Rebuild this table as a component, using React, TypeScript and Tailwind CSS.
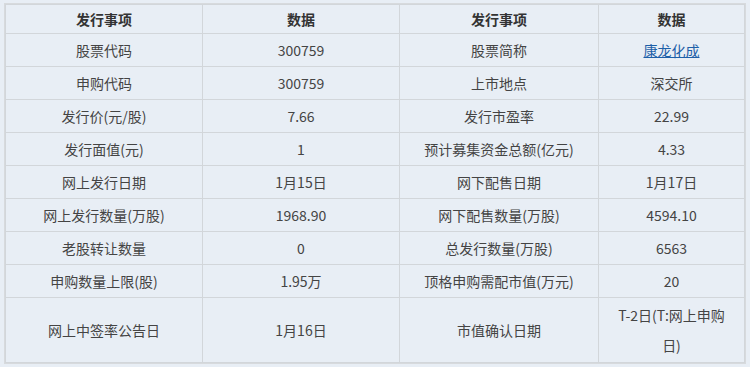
import React from "react";

type Row = {
  label1: string;
  value1: React.ReactNode;
  label2: string;
  value2: React.ReactNode;
  tall?: boolean;
};

const rows: Row[] = [
  { label1: "股票代码", value1: "300759", label2: "股票简称", value2: <a href="#" className="text-[#1d5fa8] underline">康龙化成</a> },
  { label1: "申购代码", value1: "300759", label2: "上市地点", value2: "深交所" },
  { label1: "发行价(元/股)", value1: "7.66", label2: "发行市盈率", value2: "22.99" },
  { label1: "发行面值(元)", value1: "1", label2: "预计募集资金总额(亿元)", value2: "4.33" },
  { label1: "网上发行日期", value1: "1月15日", label2: "网下配售日期", value2: "1月17日" },
  { label1: "网上发行数量(万股)", value1: "1968.90", label2: "网下配售数量(万股)", value2: "4594.10" },
  { label1: "老股转让数量", value1: "0", label2: "总发行数量(万股)", value2: "6563" },
  { label1: "申购数量上限(股)", value1: "1.95万", label2: "顶格申购需配市值(万元)", value2: "20" },
  {
    label1: "网上中签率公告日",
    value1: "1月16日",
    label2: "市值确认日期",
    value2: (
      <>
        T-2日(T:网上申购
        <br />
        日)
      </>
    ),
    tall: true,
  },
];

const cell = "border border-[#d2d6da] text-center align-middle px-[6px] py-0";

export default function App() {
  return (
    <div className="w-[750px] h-[367px] overflow-hidden bg-[#e8eef5] pl-[4px] pt-[3px] font-['Noto_Sans_CJK_SC',sans-serif] text-[14px] text-[#444]">
      <div className="w-[742px] border border-[#d7dadd]">
        <table className="w-full table-fixed border-collapse">
          <colgroup>
            <col className="w-[197px]" />
            <col className="w-[197px]" />
            <col className="w-[199px]" />
            <col />
          </colgroup>
          <thead>
            <tr className="h-[29px] font-bold text-[#333] leading-[24px]">
              <th className={cell}>发行事项</th>
              <th className={cell}>数据</th>
              <th className={cell}>发行事项</th>
              <th className={cell}>数据</th>
            </tr>
          </thead>
          <tbody>
            {rows.map((r) => (
              <tr key={r.label1} className={r.tall ? "h-[65px] leading-[30px]" : "h-[33px] leading-[26px]"}>
                <td className={cell}>{r.label1}</td>
                <td className={cell}>{r.value1}</td>
                <td className={cell}>{r.label2}</td>
                <td className={cell}>{r.value2}</td>
              </tr>
            ))}
          </tbody>
        </table>
      </div>
    </div>
  );
}
